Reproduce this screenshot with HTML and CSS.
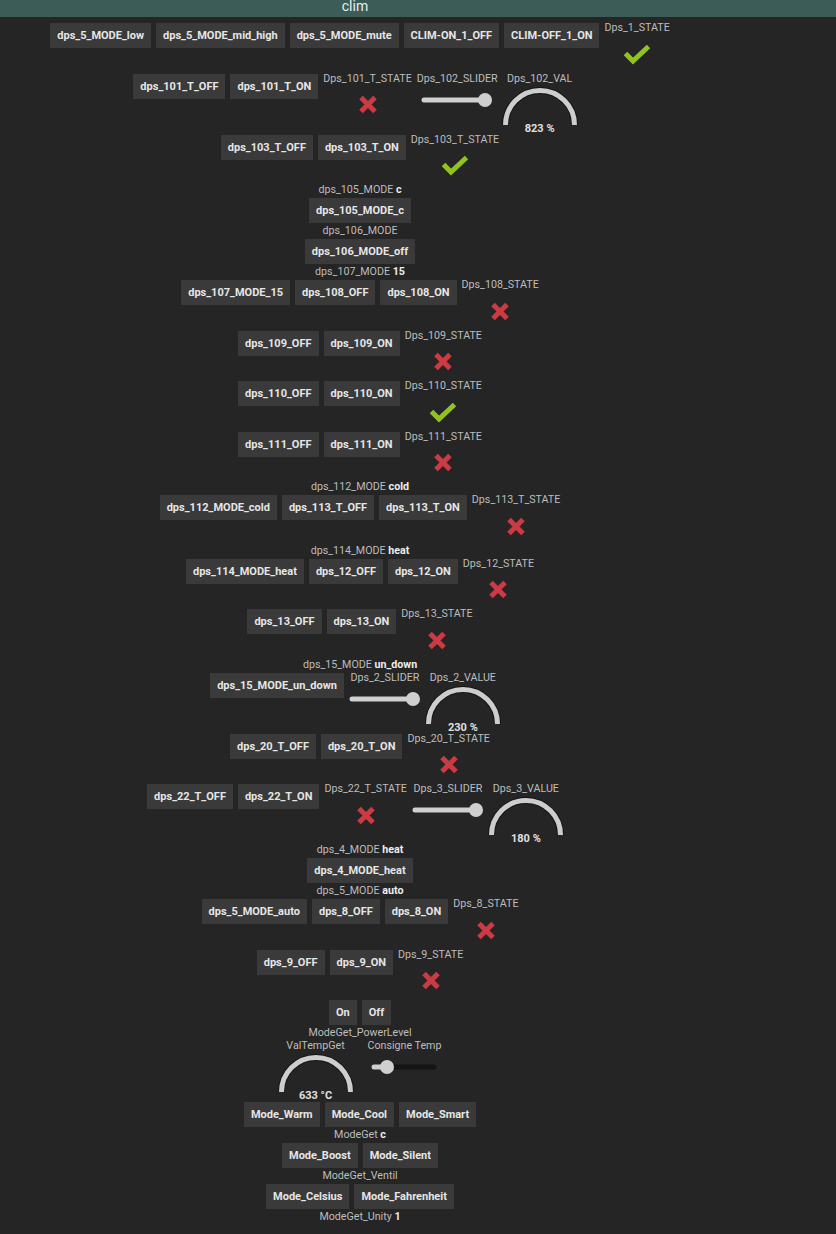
FILE: index.html
```html
<!DOCTYPE html>
<html lang="fr">
  <head>
    <title>clim</title>
    <meta charset="UTF-8" />
    <meta name="viewport" content="width=device-width, initial-scale=1.0" />
    <link rel="stylesheet" href="styles.css">
  </head>

  <body>
    <div class="eq-header">
      <span class="eq-title">clim</span>
    </div>

    <div class="eq-body">
      <div class="cmd-line">
        <button class="cmd-btn">dps_5_MODE_low</button>
        <button class="cmd-btn">dps_5_MODE_mid_high</button>
        <button class="cmd-btn">dps_5_MODE_mute</button>
        <button class="cmd-btn">CLIM-ON_1_OFF</button>
        <button class="cmd-btn">CLIM-OFF_1_ON</button>
        <div class="cmd-state">
          <span class="cmd-label">Dps_1_STATE</span>
          <span class="state-icon"><svg width="28" height="21" viewBox="0 0 28 21"><path class="ico-on" d="M2.5 9.5 L10 17 L25.5 2.5" /></svg></span>
        </div>
      </div>

      <div class="cmd-line">
        <button class="cmd-btn">dps_101_T_OFF</button>
        <button class="cmd-btn">dps_101_T_ON</button>
        <div class="cmd-state">
          <span class="cmd-label">Dps_101_T_STATE</span>
          <span class="state-icon"><svg width="20" height="19" viewBox="0 0 20 19"><path class="ico-off" d="M3 2.5 L17 16.5 M17 2.5 L3 16.5" /></svg></span>
        </div>
        <div class="cmd-slider">
          <span class="cmd-label">Dps_102_SLIDER</span>
          <svg class="slider" width="72" height="16" viewBox="0 0 72 16"><line class="track" x1="3" y1="8" x2="64" y2="8" /><circle class="thumb" cx="64" cy="8" r="7" /></svg>
        </div>
        <div class="cmd-gauge">
          <span class="cmd-label">Dps_102_VAL</span>
          <svg class="gauge" width="74" height="37" viewBox="0 0 74 37"><path class="arc-edge" d="M2.5 37 A34.5 34.5 0 0 1 71.5 37" /><path class="arc" d="M2.5 37 A34.5 34.5 0 0 1 71.5 37" /></svg>
          <span class="gauge-val">823 %</span>
        </div>
      </div>

      <div class="cmd-line">
        <button class="cmd-btn">dps_103_T_OFF</button>
        <button class="cmd-btn">dps_103_T_ON</button>
        <div class="cmd-state">
          <span class="cmd-label">Dps_103_T_STATE</span>
          <span class="state-icon"><svg width="28" height="21" viewBox="0 0 28 21"><path class="ico-on" d="M2.5 9.5 L10 17 L25.5 2.5" /></svg></span>
        </div>
      </div>

      <div class="cmd-info">dps_105_MODE <b>c</b></div>
      <div class="cmd-line">
        <button class="cmd-btn">dps_105_MODE_c</button>
      </div>
      <div class="cmd-info">dps_106_MODE</div>
      <div class="cmd-line">
        <button class="cmd-btn">dps_106_MODE_off</button>
      </div>
      <div class="cmd-info">dps_107_MODE <b>15</b></div>

      <div class="cmd-line">
        <button class="cmd-btn">dps_107_MODE_15</button>
        <button class="cmd-btn">dps_108_OFF</button>
        <button class="cmd-btn">dps_108_ON</button>
        <div class="cmd-state">
          <span class="cmd-label">Dps_108_STATE</span>
          <span class="state-icon"><svg width="20" height="19" viewBox="0 0 20 19"><path class="ico-off" d="M3 2.5 L17 16.5 M17 2.5 L3 16.5" /></svg></span>
        </div>
      </div>

      <div class="cmd-line">
        <button class="cmd-btn">dps_109_OFF</button>
        <button class="cmd-btn">dps_109_ON</button>
        <div class="cmd-state">
          <span class="cmd-label">Dps_109_STATE</span>
          <span class="state-icon"><svg width="20" height="19" viewBox="0 0 20 19"><path class="ico-off" d="M3 2.5 L17 16.5 M17 2.5 L3 16.5" /></svg></span>
        </div>
      </div>

      <div class="cmd-line">
        <button class="cmd-btn">dps_110_OFF</button>
        <button class="cmd-btn">dps_110_ON</button>
        <div class="cmd-state">
          <span class="cmd-label">Dps_110_STATE</span>
          <span class="state-icon"><svg width="28" height="21" viewBox="0 0 28 21"><path class="ico-on" d="M2.5 9.5 L10 17 L25.5 2.5" /></svg></span>
        </div>
      </div>

      <div class="cmd-line">
        <button class="cmd-btn">dps_111_OFF</button>
        <button class="cmd-btn">dps_111_ON</button>
        <div class="cmd-state">
          <span class="cmd-label">Dps_111_STATE</span>
          <span class="state-icon"><svg width="20" height="19" viewBox="0 0 20 19"><path class="ico-off" d="M3 2.5 L17 16.5 M17 2.5 L3 16.5" /></svg></span>
        </div>
      </div>

      <div class="cmd-info">dps_112_MODE <b>cold</b></div>
      <div class="cmd-line">
        <button class="cmd-btn">dps_112_MODE_cold</button>
        <button class="cmd-btn">dps_113_T_OFF</button>
        <button class="cmd-btn">dps_113_T_ON</button>
        <div class="cmd-state">
          <span class="cmd-label">Dps_113_T_STATE</span>
          <span class="state-icon"><svg width="20" height="19" viewBox="0 0 20 19"><path class="ico-off" d="M3 2.5 L17 16.5 M17 2.5 L3 16.5" /></svg></span>
        </div>
      </div>

      <div class="cmd-info">dps_114_MODE <b>heat</b></div>
      <div class="cmd-line">
        <button class="cmd-btn">dps_114_MODE_heat</button>
        <button class="cmd-btn">dps_12_OFF</button>
        <button class="cmd-btn">dps_12_ON</button>
        <div class="cmd-state">
          <span class="cmd-label">Dps_12_STATE</span>
          <span class="state-icon"><svg width="20" height="19" viewBox="0 0 20 19"><path class="ico-off" d="M3 2.5 L17 16.5 M17 2.5 L3 16.5" /></svg></span>
        </div>
      </div>

      <div class="cmd-line">
        <button class="cmd-btn">dps_13_OFF</button>
        <button class="cmd-btn">dps_13_ON</button>
        <div class="cmd-state">
          <span class="cmd-label">Dps_13_STATE</span>
          <span class="state-icon"><svg width="20" height="19" viewBox="0 0 20 19"><path class="ico-off" d="M3 2.5 L17 16.5 M17 2.5 L3 16.5" /></svg></span>
        </div>
      </div>

      <div class="cmd-info">dps_15_MODE <b>un_down</b></div>
      <div class="cmd-line">
        <button class="cmd-btn">dps_15_MODE_un_down</button>
        <div class="cmd-slider">
          <span class="cmd-label">Dps_2_SLIDER</span>
          <svg class="slider" width="72" height="16" viewBox="0 0 72 16"><line class="track" x1="3" y1="8" x2="64" y2="8" /><circle class="thumb" cx="64" cy="8" r="7" /></svg>
        </div>
        <div class="cmd-gauge">
          <span class="cmd-label">Dps_2_VALUE</span>
          <svg class="gauge" width="74" height="37" viewBox="0 0 74 37"><path class="arc-edge" d="M2.5 37 A34.5 34.5 0 0 1 71.5 37" /><path class="arc" d="M2.5 37 A34.5 34.5 0 0 1 71.5 37" /></svg>
          <span class="gauge-val">230 %</span>
        </div>
      </div>

      <div class="cmd-line">
        <button class="cmd-btn">dps_20_T_OFF</button>
        <button class="cmd-btn">dps_20_T_ON</button>
        <div class="cmd-state">
          <span class="cmd-label">Dps_20_T_STATE</span>
          <span class="state-icon"><svg width="20" height="19" viewBox="0 0 20 19"><path class="ico-off" d="M3 2.5 L17 16.5 M17 2.5 L3 16.5" /></svg></span>
        </div>
      </div>

      <div class="cmd-line">
        <button class="cmd-btn">dps_22_T_OFF</button>
        <button class="cmd-btn">dps_22_T_ON</button>
        <div class="cmd-state">
          <span class="cmd-label">Dps_22_T_STATE</span>
          <span class="state-icon"><svg width="20" height="19" viewBox="0 0 20 19"><path class="ico-off" d="M3 2.5 L17 16.5 M17 2.5 L3 16.5" /></svg></span>
        </div>
        <div class="cmd-slider">
          <span class="cmd-label">Dps_3_SLIDER</span>
          <svg class="slider" width="72" height="16" viewBox="0 0 72 16"><line class="track" x1="3" y1="8" x2="64" y2="8" /><circle class="thumb" cx="64" cy="8" r="7" /></svg>
        </div>
        <div class="cmd-gauge">
          <span class="cmd-label">Dps_3_VALUE</span>
          <svg class="gauge" width="74" height="37" viewBox="0 0 74 37"><path class="arc-edge" d="M2.5 37 A34.5 34.5 0 0 1 71.5 37" /><path class="arc" d="M2.5 37 A34.5 34.5 0 0 1 71.5 37" /></svg>
          <span class="gauge-val">180 %</span>
        </div>
      </div>

      <div class="cmd-info">dps_4_MODE <b>heat</b></div>
      <div class="cmd-line">
        <button class="cmd-btn">dps_4_MODE_heat</button>
      </div>
      <div class="cmd-info">dps_5_MODE <b>auto</b></div>

      <div class="cmd-line">
        <button class="cmd-btn">dps_5_MODE_auto</button>
        <button class="cmd-btn">dps_8_OFF</button>
        <button class="cmd-btn">dps_8_ON</button>
        <div class="cmd-state">
          <span class="cmd-label">Dps_8_STATE</span>
          <span class="state-icon"><svg width="20" height="19" viewBox="0 0 20 19"><path class="ico-off" d="M3 2.5 L17 16.5 M17 2.5 L3 16.5" /></svg></span>
        </div>
      </div>

      <div class="cmd-line">
        <button class="cmd-btn">dps_9_OFF</button>
        <button class="cmd-btn">dps_9_ON</button>
        <div class="cmd-state">
          <span class="cmd-label">Dps_9_STATE</span>
          <span class="state-icon"><svg width="20" height="19" viewBox="0 0 20 19"><path class="ico-off" d="M3 2.5 L17 16.5 M17 2.5 L3 16.5" /></svg></span>
        </div>
      </div>

      <div class="cmd-line">
        <button class="cmd-btn">On</button>
        <button class="cmd-btn">Off</button>
      </div>
      <div class="cmd-info">ModeGet_PowerLevel</div>

      <div class="cmd-line">
        <div class="cmd-gauge">
          <span class="cmd-label">ValTempGet</span>
          <svg class="gauge" width="74" height="37" viewBox="0 0 74 37"><path class="arc-edge" d="M2.5 37 A34.5 34.5 0 0 1 71.5 37" /><path class="arc" d="M2.5 37 A34.5 34.5 0 0 1 71.5 37" /></svg>
          <span class="gauge-val">633 °C</span>
        </div>
        <div class="cmd-slider">
          <span class="cmd-label">Consigne Temp</span>
          <svg class="slider" width="66" height="16" viewBox="0 0 66 16"><line class="track-rest" x1="16" y1="8" x2="63" y2="8" /><line class="track" x1="3" y1="8" x2="16" y2="8" /><circle class="thumb" cx="16" cy="8" r="7" /></svg>
        </div>
      </div>

      <div class="cmd-line">
        <button class="cmd-btn">Mode_Warm</button>
        <button class="cmd-btn">Mode_Cool</button>
        <button class="cmd-btn">Mode_Smart</button>
      </div>
      <div class="cmd-info">ModeGet <b>c</b></div>
      <div class="cmd-line">
        <button class="cmd-btn">Mode_Boost</button>
        <button class="cmd-btn">Mode_Silent</button>
      </div>
      <div class="cmd-info">ModeGet_Ventil</div>
      <div class="cmd-line">
        <button class="cmd-btn">Mode_Celsius</button>
        <button class="cmd-btn">Mode_Fahrenheit</button>
      </div>
      <div class="cmd-info">ModeGet_Unity <b>1</b></div>
    </div>
  </body>
</html>
```

FILE: styles.css
```css
body {
  font-family: Roboto, "Liberation Sans", sans-serif;
  font-size: 11px;
  background-color: #252525;
  color: #bdbdbd;
  margin: 0;
}

.eq-header {
  height: 17px;
  background-color: #3b5c57;
}

.eq-title {
  display: block;
  width: 710px;
  text-align: center;
  font-size: 14px;
  line-height: 13px;
  padding-bottom: 4px;
  color: #e6efed;
}

.eq-body {
  width: 720px;
  padding-top: 4px;
}

.cmd-line {
  display: flex;
  justify-content: center;
  align-items: flex-start;
  gap: 5px;
}

.cmd-btn {
  height: 25px;
  margin: 2px 0 1px;
  padding: 0 7px;
  border: none;
  background-color: #3a3a3a;
  color: #e6e6e6;
  font-family: inherit;
  font-size: 11px;
  font-weight: bold;
  cursor: pointer;
}

.cmd-label {
  display: block;
  font-size: 10.7px;
  line-height: 13px;
  white-space: nowrap;
}

.cmd-info {
  text-align: center;
  font-size: 10.7px;
  line-height: 13px;
}

.cmd-info b {
  color: #eee;
}

/* etat binaire */
.cmd-state {
  display: flex;
  flex-direction: column;
  align-items: center;
  padding-bottom: 5.5px;
}

.state-icon {
  display: flex;
  align-items: center;
  justify-content: center;
  height: 24px;
  margin-top: 8px;
}

.ico-on,
.ico-off {
  fill: none;
  stroke-width: 5;
  stroke-linecap: butt;
  stroke-linejoin: miter;
}

.ico-on {
  stroke: #91c31f;
}

.ico-off {
  stroke: #cc3a44;
}

/* slider */
.cmd-slider {
  display: flex;
  flex-direction: column;
  align-items: center;
}

.slider {
  margin-top: 7px;
}

.track,
.track-rest {
  stroke-width: 5;
  stroke-linecap: round;
}

.track {
  stroke: #d0d0d0;
}

.track-rest {
  stroke: #141414;
}

.thumb {
  fill: #cfcfcf;
}

/* jauge */
.cmd-gauge {
  display: flex;
  flex-direction: column;
  align-items: center;
  padding-right: 10px;
  padding-bottom: 4px;
}

.gauge {
  margin-top: 3px;
  overflow: visible;
}

.arc-edge,
.arc {
  fill: none;
}

.arc-edge {
  stroke: #151515;
  stroke-width: 7;
}

.arc {
  stroke: #cdcdcd;
  stroke-width: 5;
}

.gauge-val {
  margin-top: -3px;
  margin-bottom: -6px;
  line-height: 13px;
  font-weight: bold;
  color: #e0e0e0;
}
```
